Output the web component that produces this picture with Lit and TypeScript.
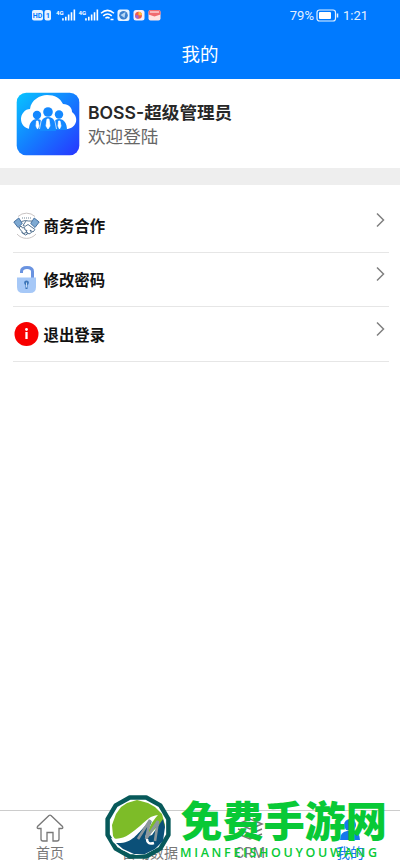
import { LitElement, html, css, svg } from 'lit';
import { customElement, property } from 'lit/decorators.js';

const badgePoints = Array.from({ length: 12 }, (_, i) => {
    const a = ((i * 30 + 15) * Math.PI) / 180;
    return `${(34 + 31.5 * Math.cos(a)).toFixed(1)},${(33 + 30.5 * Math.sin(a)).toFixed(1)}`;
}).join(' ');

const signal = svg`
  <path d="M1 10V8M4 10V6.5M7 10V4.5M10 10V2.5M13 10V0" stroke="#fff" stroke-width="1.7" fill="none"/>
`;

@customElement('status-bar')
export class StatusBar extends LitElement {
    static styles = css`
    :host {
      display: flex;
      justify-content: space-between;
      height: 30px;
      color: #e4f1ff;
    }

    svg {
      display: block;
    }

    .right {
      display: flex;
      align-items: center;
      padding: 1px 32px 0 0;
      font-size: 13px;
    }

    .right svg {
      margin: 0 4px 0 2px;
    }
  `;

    render() {
        return html`
      <svg width="180" height="30" viewBox="0 0 180 30" font-family="Roboto, sans-serif" font-weight="700">
        <rect x="32" y="10" width="11" height="10.5" rx="2" fill="#e8f3ff" />
        <text x="32.8" y="18" font-size="7" fill="#007aff">HD</text>
        <rect x="44.5" y="10" width="6.5" height="10.5" rx="2" fill="#e8f3ff" />
        <text x="45.8" y="18" font-size="7.5" fill="#007aff">1</text>
        <text x="56" y="14.5" font-size="6" fill="#fff">4G</text>
        <g transform="translate(62 9.5) scale(.95 1.1)">${signal}</g>
        <text x="78.5" y="14.5" font-size="6" fill="#fff">4G</text>
        <g transform="translate(85 9.5) scale(.95 1.1)">${signal}</g>
        <g fill="none" stroke="#fff" stroke-width="1.5">
          <path d="M101 13.2Q107.500 7.500 114 13.2M103.2 15.9Q107.500 12 111.8 15.9M105.4 18.3Q107.500 16.500 109.6 18.3" />
          <path d="M110.5 19.500h3" />
        </g>
        <rect x="117.500" y="9.500" width="12" height="11.500" rx="2.500" fill="#e9f4ff" />
        <circle cx="123.500" cy="15.200" r="4.300" fill="#3b7fcd" />
        <path d="M120.500 15l5-3-1 6z" fill="#b5d6f5" />
        <rect x="133.500" y="10" width="11" height="10.500" rx="2.500" fill="#f7edf7" />
        <circle cx="138.500" cy="15.300" r="3.500" fill="#ef5b4c" />
        <path d="M138.500 11.800a3.500 3.500 0 0 1 3.500 3.500h-3.500z" fill="#ffbf3c" />
        <path d="M135 15.300a3.500 3.500 0 0 0 3.500 3.500v-3.500z" fill="#9b66d9" />
        <rect x="148.500" y="10" width="12" height="10.500" rx="2" fill="#ffe3e3" />
        <path d="M148.500 14.500V12a2 2 0 0 1 2-2h8a2 2 0 0 1 2 2v2.500l-6 2z" fill="#f16a70" />
        <path d="M150 12h9" stroke="#fff" />
      </svg>
      <div class="right">
        79%
        <svg width="23" height="13" viewBox="0 0 23 13">
          <rect x="1" y="1" width="18.5" height="11" rx="2.5" fill="none" stroke="#e4f1ff" stroke-width="1.2" />
          <rect x="3" y="3" width="12" height="7" rx="1" fill="#fff" />
          <path d="M21.5 4.5v4" stroke="#e4f1ff" stroke-width="1.5" />
        </svg>
        1:21
      </div>
    `;
    }
}

@customElement('menu-item')
export class MenuItem extends LitElement {
    @property() label = '';

    static styles = css`
    :host {
      display: flex;
      align-items: center;
      box-sizing: border-box;
      height: 54.4px;
      margin: 0 11px 0 13px;
      border-bottom: 1px solid #e6e6e6;
      font-size: 15.4px;
      font-weight: 700;
      color: #111;
    }

    .icon {
      display: flex;
      width: 27px;
      margin-right: 3.5px;
    }

    .label {
      flex: 1;
      margin-top: -1px;
    }

    .arrow {
      margin: 0 3.5px 11px 0;
    }
  `;

    render() {
        return html`
      <span class="icon"><slot></slot></span>
      <span class="label">${this.label}</span>
      <svg class="arrow" width="11" height="16" viewBox="0 0 11 16">
        <path d="M2 1.5L8.5 8 2 14.5" fill="none" stroke="#808080" stroke-width="1.5" />
      </svg>
    `;
    }
}

@customElement('site-mark')
export class SiteMark extends LitElement {
    static styles = css`
    svg {
      display: block;
    }
  `;

    render() {
        return html`
      <svg width="300" height="93" viewBox="0 -20 300 93">
        <g transform="translate(4 1)">
          <polygon points=${badgePoints} fill="#fff" stroke="#07595a" stroke-width="4.5" stroke-linejoin="round" />
          <path d="M23 9l10-3 11 3 7 4 7 7 3 11-3 12-7 8-8 6-9 3-11-3-8-6-6-9-1-11 4-11 5-7z" fill="#7dbc28" />
          <path d="M7 44c13 3 20-5 29-12 8-7 10-10 18-11-7 8-9 12-11 22l15-15v16l-7 11-10 5-9 1-14-5-9-8z" fill="#fff" />
          <path d="M12 49c16 1 21-9 29-17l7-5-7 16 7-2 11-16 2 8-2 14-8 8-10 5H30l-11-5z" fill="#0b5078" />
          <path d="M34 45l12-19-4 19 12-18-3 20" fill="none" stroke="#8b979c" stroke-width="2.6" />
          <path d="M43 45q0 6 7 4" fill="none" stroke="#fff" stroke-width="2.5" />
        </g>
        <g fill="#08c936">
          <text x="81" y="44" font-family="'Noto Sans CJK SC', sans-serif" font-weight="900" font-size="42" textLength="206" lengthAdjust="spacingAndGlyphs">免费手游网</text>
          <text x="80" y="63.5" font-family="'Open Sans', sans-serif" font-weight="600" font-size="12.5" textLength="197">MIANFEISHOUYOUWANG</text>
        </g>
      </svg>
    `;
    }
}

@customElement('app-root')
export class AppRoot extends LitElement {
    static styles = css`
    :host {
      display: flex;
      flex-direction: column;
      position: relative;
      height: 866px;
      overflow: hidden;
      background: #fff;
      font-family: Roboto, 'Noto Sans CJK SC', sans-serif;
    }

    header {
      height: 79px;
      background: #007aff;
      color: #fff;
    }

    h1 {
      margin: 0;
      font-size: 18.5px;
      font-weight: 400;
      line-height: 50px;
      text-align: center;
    }

    .profile {
      display: flex;
      gap: 8px;
      box-sizing: border-box;
      height: 106px;
      padding: 13px 16px 0;
      border-bottom: 17px solid #eee;
    }

    .name {
      margin-top: 8px;
      font: 600 17.6px/25px Inter, 'Noto Sans CJK SC', sans-serif;
      color: #282828;
    }

    .welcome {
      font-size: 17.6px;
      line-height: 25px;
      color: #666;
    }

    main {
      flex: 1;
      padding-top: 13.6px;
    }

    nav {
      display: grid;
      grid-template-columns: repeat(4, 1fr);
      height: 55px;
      border-top: 1px solid #ccc;
    }

    .tab {
      display: flex;
      flex-direction: column;
      align-items: center;
      padding-top: 2px;
      font-size: 14px;
      line-height: 20px;
      color: #777;
    }

    .tab.active {
      color: #1677ed;
    }

    site-mark {
      position: absolute;
      left: 100px;
      bottom: 0;
    }
  `;

    render() {
        return html`
      <header>
        <status-bar></status-bar>
        <h1>我的</h1>
      </header>
      <section class="profile">
        <svg width="64" height="64" viewBox="0 0 64 64">
          <defs>
            <linearGradient id="logo" x1="0" y1="0" x2="1" y2="1">
              <stop offset="0" stop-color="#08c5ff" />
              <stop offset=".5" stop-color="#147dff" />
              <stop offset="1" stop-color="#2835ff" />
            </linearGradient>
          </defs>
          <rect x=".7" y=".7" width="62.6" height="62.6" rx="9.5" fill="url(#logo)" />
          <path d="M14 37C8 36 5 32 5 27c0-5 4-10 9-10C15 8 24 3 31 3c8 0 13 3 16 9 6 0 9 4 9 8 8 6 4 17-6 17z" fill="#fff" />
          <g fill="#1488ff">
            <circle cx="21" cy="23" r="4.2" />
            <circle cx="43" cy="22.5" r="4.2" />
            <path d="M13 38c0-7 3-11 8-11s7 4 7 11zM36 38c0-7 2-11 7-11s8 4 8 11z" />
            <circle cx="32" cy="20" r="4.8" />
            <path d="M24 39c0-9 2-14 8-14s8 5 8 14z" />
          </g>
          <path d="M31 27h2l1 7-2 3-2-3zM20.5 29H22l1 5-1.5 3-1.5-3zM42.5 29H44l1 5-1.5 3-1.5-3zM25.5 27l-2 10M38.5 27l2 10" fill="#fff" stroke="#fff" stroke-width=".7" />
        </svg>
        <div>
          <div class="name">BOSS-超级管理员</div>
          <div class="welcome">欢迎登陆</div>
        </div>
      </section>
      <main>
        <menu-item label="商务合作">
          <svg width="27" height="27" viewBox="0 0 27 27" fill="none">
            <path d="M5 4.500a12.500 12.500 0 0 1 17 0M4 22a12.500 12.500 0 0 0 19 0" stroke="#c9c4c4" />
            <path d="M.8 10l5-4 3.500 5.500-4.300 4zM26.200 10l-5-4-3.500 5.500 4.300 4z" fill="#7ea9d2" stroke="#3c6898" stroke-width=".9" />
            <path d="M8.500 9.500l4-1 3 .5 3.500 0M13 9l-3 4.500q2 2 5-1l7 5-2 2.500-3-2 1.500 2.500-2.500 1.500-2.500-2 1 2-2 1-4-2.500M6 16l2-2 1.500 2 2-.5.500 2.500 2 .5-1.500 2.500-2 .500L6 16" stroke="#426384" stroke-width=".9" />
            <path d="M9 6h9" stroke="#718596" stroke-dasharray="1 1" />
          </svg>
        </menu-item>
        <menu-item label="修改密码">
          <svg width="27" height="29" viewBox="0 0 27 29">
            <path d="M8.500 8V6.500q0-4 5.500-4t5.500 4V13" fill="none" stroke="#6a93e0" stroke-width="3" />
            <path d="M4 12.500h19V22q0 6-6 6h-7q-6 0-6-6z" fill="#a6c8f7" />
            <circle cx="13.500" cy="17.800" r="2.400" fill="#3d75b8" />
            <path d="M13.500 18v6" stroke="#3d75b8" stroke-width="2" />
            <path d="M13.500 17.500v5" stroke="#eaf4ff" stroke-width=".8" />
          </svg>
        </menu-item>
        <menu-item label="退出登录">
          <svg width="27" height="26" viewBox="0 0 27 26">
            <circle cx="13.5" cy="13" r="12" fill="#f80000" />
            <circle cx="13.5" cy="8.5" r="1.4" fill="#fff" />
            <path d="M13.5 11v7" stroke="#fff" stroke-width="2.3" />
          </svg>
        </menu-item>
      </main>
      <nav>
        <div class="tab">
          <svg width="30" height="30" viewBox="0 0 30 30">
            <path d="M14 2.500L2.500 13.500q-1 2 1 2H6V26q0 2 2 2h4v-8.500h6V28h4q2 0 2-2V15.500h2.500q2 0 1-2L16 2.500q-1-.8-2 0z" fill="none" stroke="#777" stroke-width="1.3" />
          </svg>
          首页
        </div>
        <div class="tab">
          <svg width="30" height="30" viewBox="0 0 30 30">
            <path d="M4 26V18h3v8M9 26V10h3v16" fill="none" stroke="#777" />
          </svg>
          自动数据
        </div>
        <div class="tab">
          <svg width="30" height="30" viewBox="0 0 30 30">
            <path d="M3 11l12-5 12 5-12 5zM3 16l12 5 12-5M3 21l12 5 12-5" fill="none" stroke="#777" stroke-width="1.5" />
          </svg>
          CRM
        </div>
        <div class="tab active">
          <svg width="30" height="30" viewBox="0 0 30 30">
            <circle cx="15" cy="12" r="6" fill="#1677ed" />
            <path d="M5 27q0-8 7-9h6q7 1 7 9z" fill="#1677ed" />
          </svg>
          我的
        </div>
      </nav>
      <site-mark></site-mark>
    `;
    }
}
